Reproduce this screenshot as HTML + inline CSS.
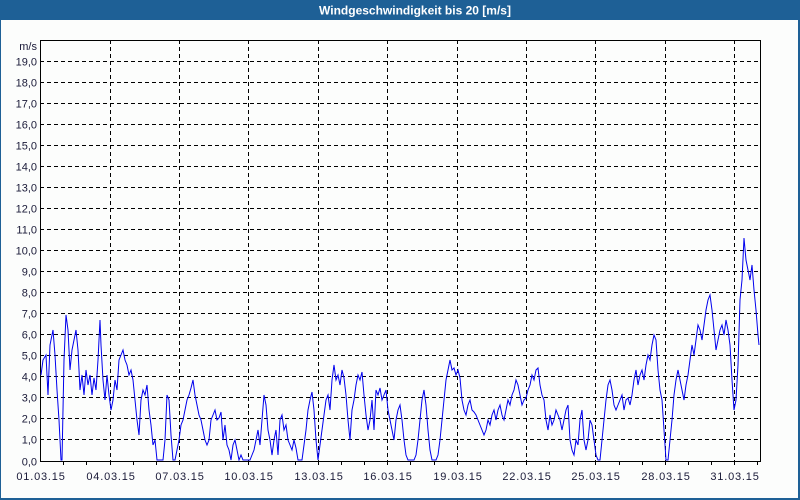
<!DOCTYPE html>
<html><head><meta charset="utf-8"><style>
html,body{margin:0;padding:0;background:#fcfdfc;}
body{width:800px;height:500px;overflow:hidden;position:relative;font-family:"Liberation Sans",Tahoma,sans-serif;}
</style></head><body>
<svg width="800" height="500" xmlns="http://www.w3.org/2000/svg" style="position:absolute;left:0;top:0">
<rect x="0" y="0" width="800" height="500" fill="#fcfdfc"/>
<rect x="0" y="0" width="800" height="20" fill="#1e6096"/>
<rect x="0" y="20" width="1" height="480" fill="#1e6096"/>
<rect x="798" y="20" width="2" height="480" fill="#1e6096"/>
<rect x="0" y="498" width="800" height="2" fill="#1e6096"/>
<text x="415" y="14.5" fill="#fff" font-size="12" font-weight="bold" text-anchor="middle">Windgeschwindigkeit bis 20 [m/s]</text>
<g stroke="#000" stroke-width="1" stroke-dasharray="4,3" shape-rendering="crispEdges">
<line x1="40" x2="760" y1="61.5" y2="61.5"/><line x1="40" x2="760" y1="82.5" y2="82.5"/><line x1="40" x2="760" y1="103.5" y2="103.5"/><line x1="40" x2="760" y1="124.5" y2="124.5"/><line x1="40" x2="760" y1="145.5" y2="145.5"/><line x1="40" x2="760" y1="166.5" y2="166.5"/><line x1="40" x2="760" y1="187.5" y2="187.5"/><line x1="40" x2="760" y1="208.5" y2="208.5"/><line x1="40" x2="760" y1="229.5" y2="229.5"/><line x1="40" x2="760" y1="250.5" y2="250.5"/><line x1="40" x2="760" y1="271.5" y2="271.5"/><line x1="40" x2="760" y1="292.5" y2="292.5"/><line x1="40" x2="760" y1="313.5" y2="313.5"/><line x1="40" x2="760" y1="334.5" y2="334.5"/><line x1="40" x2="760" y1="355.5" y2="355.5"/><line x1="40" x2="760" y1="376.5" y2="376.5"/><line x1="40" x2="760" y1="397.5" y2="397.5"/><line x1="40" x2="760" y1="418.5" y2="418.5"/><line x1="40" x2="760" y1="439.5" y2="439.5"/>
<line x1="110.5" x2="110.5" y1="40" y2="461"/><line x1="179.5" x2="179.5" y1="40" y2="461"/><line x1="248.5" x2="248.5" y1="40" y2="461"/><line x1="318.5" x2="318.5" y1="40" y2="461"/><line x1="387.5" x2="387.5" y1="40" y2="461"/><line x1="457.5" x2="457.5" y1="40" y2="461"/><line x1="526.5" x2="526.5" y1="40" y2="461"/><line x1="595.5" x2="595.5" y1="40" y2="461"/><line x1="665.5" x2="665.5" y1="40" y2="461"/><line x1="734.5" x2="734.5" y1="40" y2="461"/>
</g>
<g stroke="#000" stroke-width="1" shape-rendering="crispEdges">
<line x1="40.5" y1="40" x2="40.5" y2="462"/><line x1="760.5" y1="40" x2="760.5" y2="462"/>
<line x1="40" y1="40.5" x2="761" y2="40.5"/><line x1="40" y1="461.5" x2="761" y2="461.5"/>
<line x1="63.5" x2="63.5" y1="461" y2="465"/><line x1="86.5" x2="86.5" y1="461" y2="465"/><line x1="110.5" x2="110.5" y1="461" y2="465"/><line x1="133.5" x2="133.5" y1="461" y2="465"/><line x1="156.5" x2="156.5" y1="461" y2="465"/><line x1="179.5" x2="179.5" y1="461" y2="465"/><line x1="202.5" x2="202.5" y1="461" y2="465"/><line x1="225.5" x2="225.5" y1="461" y2="465"/><line x1="248.5" x2="248.5" y1="461" y2="465"/><line x1="272.5" x2="272.5" y1="461" y2="465"/><line x1="295.5" x2="295.5" y1="461" y2="465"/><line x1="318.5" x2="318.5" y1="461" y2="465"/><line x1="341.5" x2="341.5" y1="461" y2="465"/><line x1="364.5" x2="364.5" y1="461" y2="465"/><line x1="387.5" x2="387.5" y1="461" y2="465"/><line x1="410.5" x2="410.5" y1="461" y2="465"/><line x1="434.5" x2="434.5" y1="461" y2="465"/><line x1="457.5" x2="457.5" y1="461" y2="465"/><line x1="480.5" x2="480.5" y1="461" y2="465"/><line x1="503.5" x2="503.5" y1="461" y2="465"/><line x1="526.5" x2="526.5" y1="461" y2="465"/><line x1="549.5" x2="549.5" y1="461" y2="465"/><line x1="572.5" x2="572.5" y1="461" y2="465"/><line x1="595.5" x2="595.5" y1="461" y2="465"/><line x1="619.5" x2="619.5" y1="461" y2="465"/><line x1="642.5" x2="642.5" y1="461" y2="465"/><line x1="665.5" x2="665.5" y1="461" y2="465"/><line x1="688.5" x2="688.5" y1="461" y2="465"/><line x1="711.5" x2="711.5" y1="461" y2="465"/><line x1="734.5" x2="734.5" y1="461" y2="465"/><line x1="757.5" x2="757.5" y1="461" y2="465"/>
</g>
<g fill="#1a1a38" font-size="11" text-anchor="end">
<text x="37" y="50">m/s</text>
<text x="37" y="65.5">19,0</text><text x="37" y="86.5">18,0</text><text x="37" y="107.5">17,0</text><text x="37" y="128.5">16,0</text><text x="37" y="149.5">15,0</text><text x="37" y="170.5">14,0</text><text x="37" y="191.5">13,0</text><text x="37" y="212.5">12,0</text><text x="37" y="233.5">11,0</text><text x="37" y="254.5">10,0</text><text x="37" y="275.5">9,0</text><text x="37" y="296.5">8,0</text><text x="37" y="317.5">7,0</text><text x="37" y="338.5">6,0</text><text x="37" y="359.5">5,0</text><text x="37" y="380.5">4,0</text><text x="37" y="401.5">3,0</text><text x="37" y="422.5">2,0</text><text x="37" y="443.5">1,0</text><text x="37" y="465.5">0,0</text>
</g>
<g fill="#1a1a38" font-size="11" text-anchor="middle" letter-spacing="0.8">
<text x="41" y="480">01.03.15</text><text x="111" y="480">04.03.15</text><text x="180" y="480">07.03.15</text><text x="249" y="480">10.03.15</text><text x="319" y="480">13.03.15</text><text x="388" y="480">16.03.15</text><text x="458" y="480">19.03.15</text><text x="527" y="480">22.03.15</text><text x="596" y="480">25.03.15</text><text x="666" y="480">28.03.15</text><text x="735" y="480">31.03.15</text>
</g>
<polyline fill="none" stroke="#0000ee" stroke-width="1" points="41,375 43,360 46,355 48,395 50,345 53,330 55,355 57,390 59,420 61,460 62,460 64,360 66,315 68,330 70,370 72,350 74,340 76,330 78,350 80,390 82,375 84,395 86,370 88,385 90,375 92,395 94,378 96,390 98,360 100,320 101,345 103,380 105,400 107,375 109,395 111,410 113,400 115,380 117,390 119,360 121,355 123,350 125,360 127,365 129,375 131,370 133,380 135,400 137,420 139,435 141,400 143,390 145,395 147,385 149,410 151,425 153,445 155,440 157,460 160,460 163,460 165,440 167,395 169,400 171,435 173,460 175,460 177,450 179,440 181,425 183,420 185,410 187,400 189,395 191,388 193,380 195,395 197,405 199,415 201,420 203,430 205,440 207,445 209,440 211,420 213,415 215,410 217,420 219,418 221,412 223,440 225,425 227,445 229,450 231,460 233,445 235,440 237,450 239,460 241,455 243,460 245,460 248,460 250,460 252,455 254,450 256,440 258,430 260,445 262,420 264,395 266,405 268,430 270,440 272,455 274,440 276,430 278,455 280,420 282,415 284,430 286,425 288,440 290,445 292,450 294,440 296,448 298,460 300,460 302,460 304,445 306,430 308,410 310,400 312,392 314,410 316,440 318,460 320,445 322,430 324,415 326,400 328,395 330,410 332,380 334,365 336,380 338,375 340,385 342,370 344,378 346,395 348,420 350,440 352,410 354,400 356,385 358,375 360,380 362,372 364,395 366,415 368,430 370,420 372,400 374,430 376,390 378,395 380,388 382,400 384,395 386,390 388,410 390,420 392,430 394,440 396,420 398,410 400,405 402,420 404,440 406,455 408,460 410,460 412,460 414,460 416,455 418,440 420,420 422,400 424,390 426,405 428,430 430,450 432,460 434,460 436,460 438,455 440,440 442,420 444,400 446,380 448,370 450,360 452,370 454,368 456,375 458,370 460,378 462,400 464,410 466,415 468,405 470,400 472,410 474,412 476,415 478,420 480,425 482,430 484,435 486,430 488,420 490,425 492,415 494,410 496,420 498,410 500,405 502,415 504,420 506,410 508,400 510,405 512,395 514,390 516,380 518,385 520,395 522,405 524,400 526,398 528,390 530,385 532,375 534,380 536,370 538,368 540,385 542,395 544,400 546,420 548,430 550,415 552,425 554,420 556,410 558,415 560,420 562,430 564,420 566,410 568,405 570,440 572,450 574,455 576,440 578,445 580,420 582,410 584,440 586,450 588,440 590,420 592,425 594,440 596,455 598,460 600,460 602,440 604,420 606,400 608,385 610,380 612,390 614,405 616,410 618,405 620,400 622,395 624,410 626,400 628,398 630,405 632,395 634,380 636,370 638,385 640,375 642,370 644,380 646,365 648,355 650,360 652,345 654,335 656,340 658,370 660,390 662,400 664,430 666,460 668,460 670,440 672,420 674,395 676,380 678,370 680,380 682,390 684,400 686,385 688,375 690,360 692,345 694,355 696,340 698,325 700,330 702,340 704,325 706,310 708,300 710,295 712,310 714,330 716,350 718,340 720,330 722,325 724,335 726,320 728,330 730,345 732,380 734,410 736,400 738,365 740,300 742,280 744,238 746,260 748,270 750,280 752,265 754,290 756,310 758,335 759,345"/>
</svg>
</body></html>
